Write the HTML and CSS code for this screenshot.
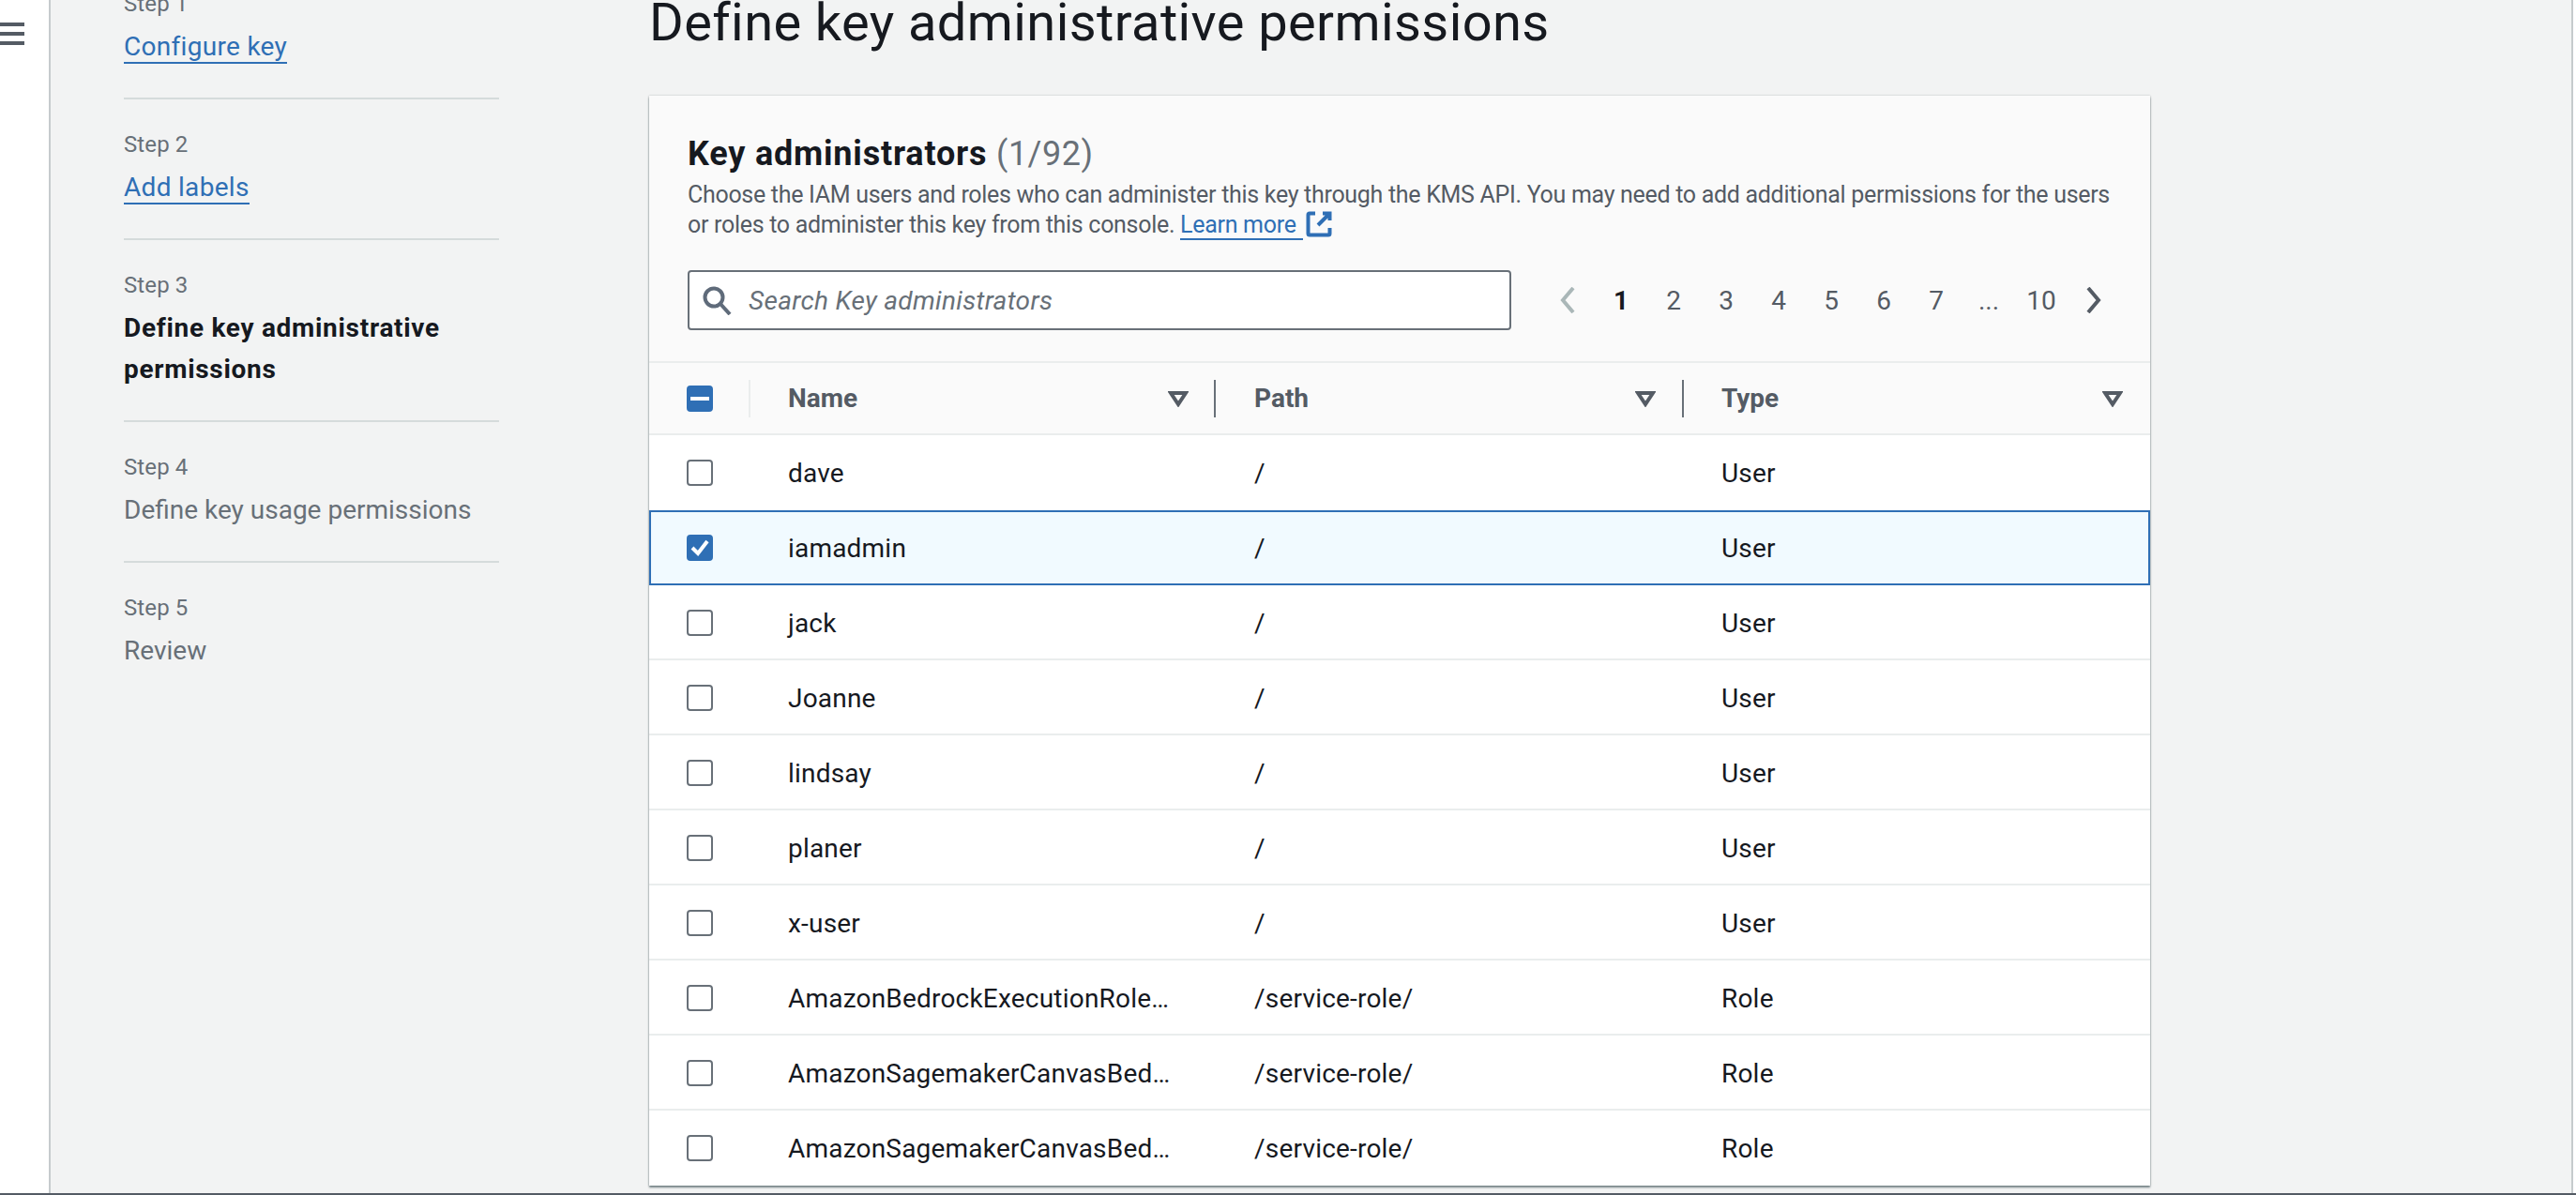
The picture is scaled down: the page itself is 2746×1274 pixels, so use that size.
FILE: index.html
```html
<!DOCTYPE html>
<html lang="en">
<head>
  <meta charset="UTF-8">
  <title>Define key administrative permissions</title>
  <link rel="stylesheet" href="styles.css">
</head>
<body>
  <div class="app">
    <div class="rail">
      <svg class="burger" width="26" height="24" viewBox="0 0 26 24"><path d="M0 2h26M0 12h26M0 22h26" stroke="#545b64" stroke-width="4" fill="none"/></svg>
    </div>
    <div class="content">
      <ul class="steps">
        <li class="step">
          <small>Step 1</small>
          <a href="#">Configure key</a>
        </li>
        <li class="step">
          <small>Step 2</small>
          <a href="#">Add labels</a>
        </li>
        <li class="step">
          <small>Step 3</small>
          <b>Define key administrative permissions</b>
        </li>
        <li class="step">
          <small>Step 4</small>
          <span>Define key usage permissions</span>
        </li>
        <li class="step last">
          <small>Step 5</small>
          <span>Review</span>
        </li>
      </ul>
      <div class="main">
        <h1>Define key administrative permissions</h1>
        <div class="card">
          <div class="card-head">
            <h2>Key administrators <span>(1/92)</span></h2>
            <p>Choose the IAM users and roles who can administer this key through the KMS API. You may need to add additional permissions for the users or roles to administer this key from this console. <a class="learn" href="#">Learn more</a><svg class="ext" width="28" height="28" viewBox="0 0 28 28"><path d="M10 2.500H4A1.500 1.500 0 0 0 2.500 4v20A1.500 1.500 0 0 0 4 25.500h20a1.500 1.500 0 0 0 1.500-1.500v-6M18 2.500h7.500V10M25 3L13 15" fill="none" stroke="#2f6fb5" stroke-width="4"/></svg>
            </p>
            <div class="tools">
              <div class="search">
                <svg width="32" height="32" viewBox="0 0 32 32"><circle cx="12" cy="13" r="9.500" fill="none" stroke="#5f6b7a" stroke-width="4"/><path d="M19 20l10 11" stroke="#5f6b7a" stroke-width="4"/></svg>
                <span>Search Key administrators</span>
              </div>
              <div class="pages">
                <svg class="chev" width="20" height="28" viewBox="0 0 20 28"><path d="M16 1L5 14l11 13" fill="none" stroke="#aab7b8" stroke-width="4"/></svg>
                <b>1</b><span>2</span><span>3</span><span>4</span><span>5</span><span>6</span><span>7</span><span>...</span><span>10</span>
                <svg class="chev" width="20" height="28" viewBox="0 0 20 28"><path d="M4 1l11 13L4 27" fill="none" stroke="#545b64" stroke-width="4"/></svg>
              </div>
            </div>
          </div>
          <div class="row thead">
            <div class="cell-check"><span class="box on"><svg width="20" height="4" viewBox="0 0 20 4"><rect width="20" height="4" fill="#fff"/></svg></span></div>
            <div class="col">Name<svg class="caret" width="22" height="18" viewBox="0 0 22 18"><path d="M3 3h16l-8 12z" fill="none" stroke="#545b64" stroke-width="4"/></svg></div>
            <div class="col">Path<svg class="caret" width="22" height="18" viewBox="0 0 22 18"><path d="M3 3h16l-8 12z" fill="none" stroke="#545b64" stroke-width="4"/></svg></div>
            <div class="col">Type<svg class="caret" width="22" height="18" viewBox="0 0 22 18"><path d="M3 3h16l-8 12z" fill="none" stroke="#545b64" stroke-width="4"/></svg></div>
          </div>
          <div class="row no-line"><div class="cell-check"><span class="box"></span></div><div class="col">dave</div><div class="col">/</div><div class="col">User</div></div>
          <div class="row selected"><div class="cell-check"><span class="box on"><svg width="22" height="20" viewBox="0 0 22 20"><path d="M3 10l6 6L19 3" fill="none" stroke="#fff" stroke-width="4"/></svg></span></div><div class="col">iamadmin</div><div class="col">/</div><div class="col">User</div></div>
          <div class="row"><div class="cell-check"><span class="box"></span></div><div class="col">jack</div><div class="col">/</div><div class="col">User</div></div>
          <div class="row"><div class="cell-check"><span class="box"></span></div><div class="col">Joanne</div><div class="col">/</div><div class="col">User</div></div>
          <div class="row"><div class="cell-check"><span class="box"></span></div><div class="col">lindsay</div><div class="col">/</div><div class="col">User</div></div>
          <div class="row"><div class="cell-check"><span class="box"></span></div><div class="col">planer</div><div class="col">/</div><div class="col">User</div></div>
          <div class="row"><div class="cell-check"><span class="box"></span></div><div class="col">x-user</div><div class="col">/</div><div class="col">User</div></div>
          <div class="row"><div class="cell-check"><span class="box"></span></div><div class="col">AmazonBedrockExecutionRole…</div><div class="col">/service-role/</div><div class="col">Role</div></div>
          <div class="row"><div class="cell-check"><span class="box"></span></div><div class="col">AmazonSagemakerCanvasBed…</div><div class="col">/service-role/</div><div class="col">Role</div></div>
          <div class="row"><div class="cell-check"><span class="box"></span></div><div class="col">AmazonSagemakerCanvasBed…</div><div class="col">/service-role/</div><div class="col">Role</div></div>
        </div>
      </div>
    </div>
  </div>
  <div class="footer"></div>
</body>
</html>
```

FILE: styles.css
```css
* { box-sizing: border-box; }
html, body { margin: 0; height: 100%; overflow: hidden; }
body { background: #fff; font-family: Roboto, sans-serif; font-size: 28px; color: #16191f; display: flex; flex-direction: column; }
a { color: #2f6fb5; text-decoration: none; border-bottom: 2px solid #2f6fb5; }

.app { flex: 1; display: flex; min-height: 0; }
.rail { width: 54px; flex: none; border-right: 2px solid #c6cbcd; padding-top: 24px; }
.burger { display: block; }
.content { flex: 1; display: flex; background: #f2f3f3; border-right: 2px solid #c6cbcd; margin-right: 3px; min-width: 0; }

.steps { list-style: none; margin: -44px 0 0 78px; padding: 0; width: 400px; flex: none; }
.step { padding: 30px 0 32px; border-bottom: 2px solid #d5dbdb; line-height: 44px; }
.step small { display: block; font-size: 24px; line-height: 36px; color: #687078; margin-bottom: 6px; letter-spacing: 0.1px; }
.step a { letter-spacing: 0.3px; }
.step b { display: block; color: #16191f; font-weight: 700; letter-spacing: 0.7px; }
.step span { color: #687078; }
.step.last { border-bottom: 0; }

.main { margin-left: 160px; width: 1600px; flex: none; }
h1 { font-size: 56px; font-weight: 400; line-height: 64px; margin: -8px 0 46px; white-space: nowrap; letter-spacing: 0.4px; }

.card { background: #fff; box-shadow: 0 2px 2px rgba(0, 28, 36, 0.5), 0 0 2px rgba(0, 28, 36, 0.25); }
.card-head { background: #fafafa; height: 283px; padding: 40px 41px 0; }
h2 { font-size: 36px; line-height: 44px; margin: 0 0 6px; font-weight: 700; letter-spacing: 0.8px; }
h2 span { font-weight: 400; color: #687078; letter-spacing: 0.5px; }
.card-head p { margin: 0 0 32px; font-size: 25px; line-height: 32px; color: #545b64; letter-spacing: -0.3px; }
.learn { padding-right: 7px; }
.ext { vertical-align: -5px; margin-left: 3px; }

.tools { display: flex; align-items: center; }
.search { width: 878px; height: 64px; border: 2px solid #687078; border-radius: 4px; background: #fff; display: flex; align-items: center; gap: 17px; padding-left: 14px; flex: none; }
.search span { font-style: italic; color: #687078; letter-spacing: 0.3px; }
.pages { margin-left: 32px; display: flex; align-items: center; color: #545b64; }
.pages b, .pages span { width: 56px; text-align: center; font-weight: 400; }
.pages b { font-weight: 700; color: #16191f; margin-left: 1px; }
.chev { display: block; margin: 0 18px; }

.row { display: flex; align-items: center; height: 80px; padding-top: 2px; border-bottom: 2px solid #eaeded; letter-spacing: 0.2px; }
.row:last-child { border-bottom: 0; padding-top: 0; }
.no-line { border-bottom-color: transparent; }
.thead { height: 79px; padding-top: 0; background: #fafafa; border-top: 2px solid #eaeded; font-weight: 700; color: #545b64; letter-spacing: 0; }
.cell-check { width: 108px; height: 40px; padding-left: 40px; display: flex; align-items: center; border-right: 2px solid #eaeded; flex: none; }
.row:not(.thead) .cell-check { border-right: 0; }
.col { width: 496px; padding: 0 16px 0 41px; display: flex; align-items: center; justify-content: space-between; height: 40px; white-space: nowrap; }
.col:nth-child(2) { padding-left: 40px; padding-right: 15px; }
.col:nth-child(3) { width: 499px; }
.col:nth-child(4) { padding-left: 40px; }
.thead .col:nth-child(2), .thead .col:nth-child(3) { border-right: 2px solid #687078; }
.caret { margin-right: 12px; }
.box { width: 28px; height: 28px; border: 2px solid #687078; border-radius: 4px; background: #fff; display: flex; align-items: center; justify-content: center; }
.box.on { background: #2f6fb5; border-color: #2f6fb5; }
.selected { background: #f1faff; outline: 2px solid #2f6fb5; outline-offset: -2px; border-bottom-color: #2f6fb5; }

.footer { height: 2px; background: #545b64; flex: none; }
```
